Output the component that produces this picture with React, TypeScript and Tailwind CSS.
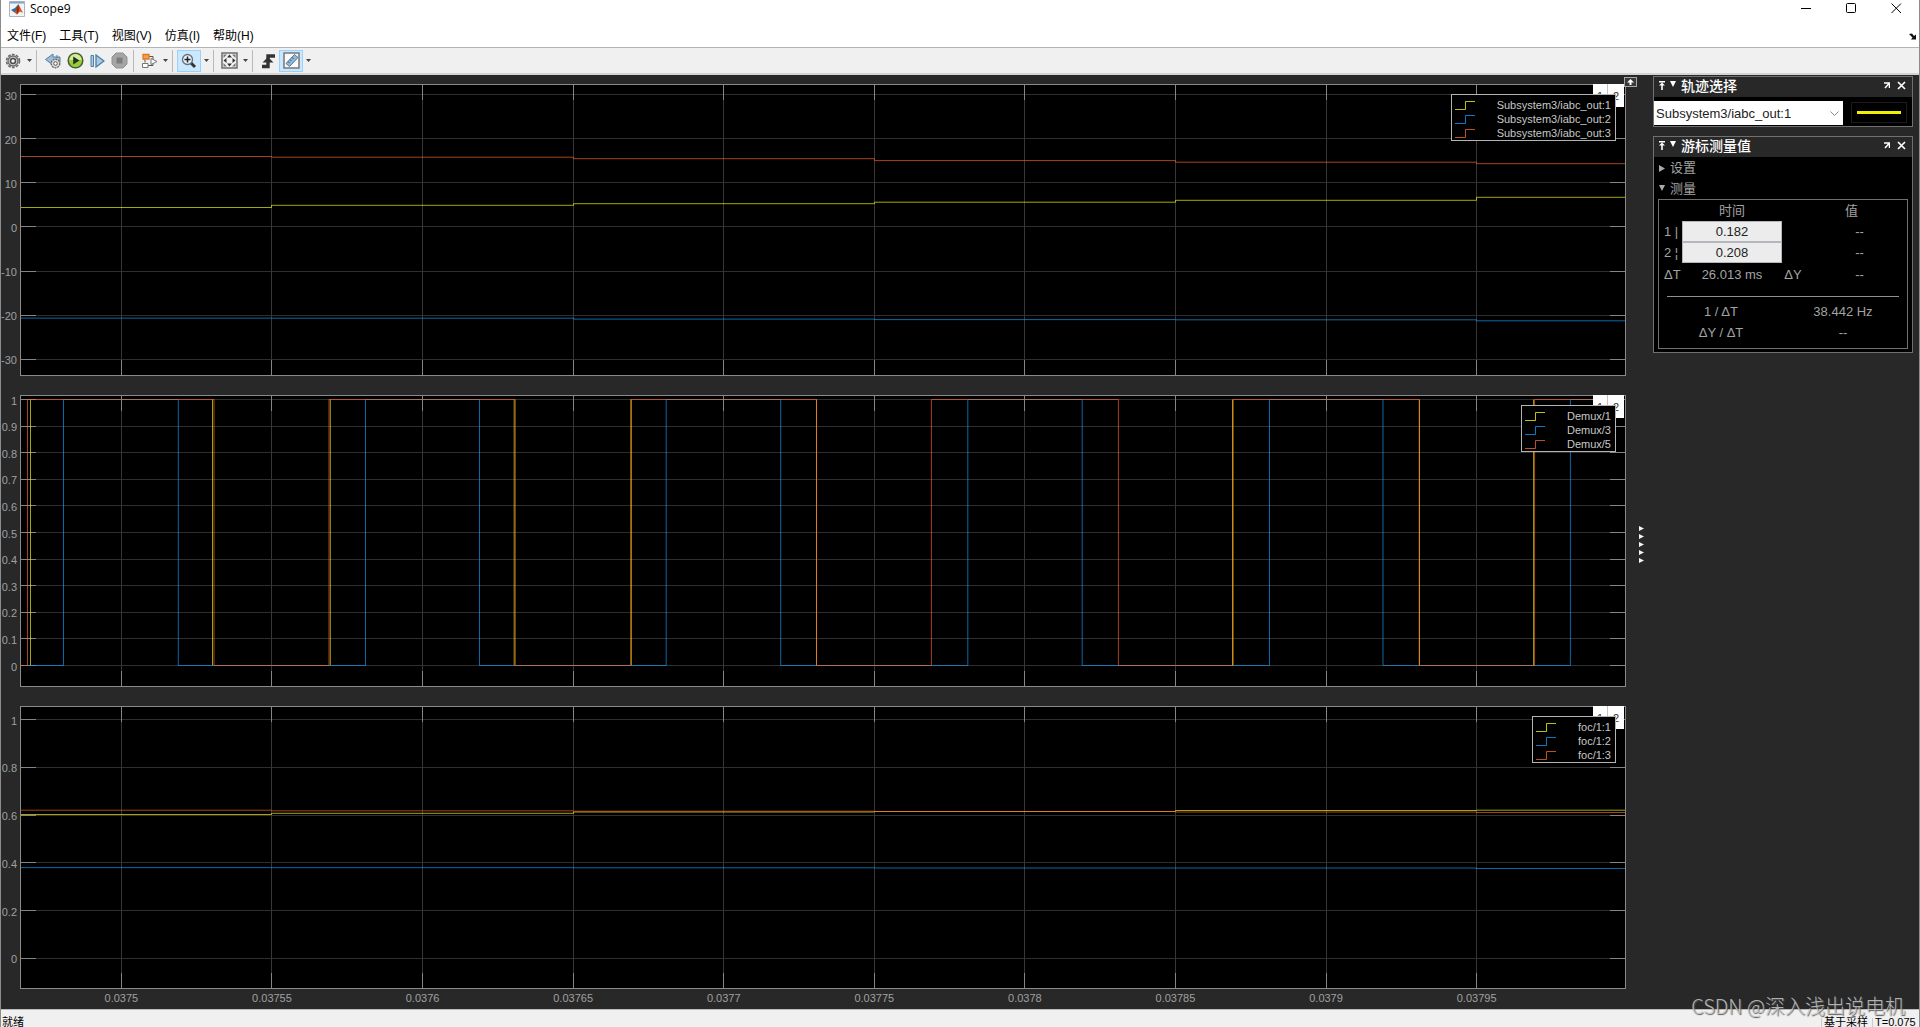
import { useState } from "react";
import type { ReactNode } from "react";

type Trace = { color: string; d: string };

type PlotProps = {
  name: string;
  height: number;
  yTicks: { label: string; y: number }[];
  traces: Trace[];
  legend: string[];
  showTime?: boolean;
  className: string;
};

const YELLOW = "#ffff11";
const BLUE = "#139fff";
const RED = "#ff6929";
const COLORS = [YELLOW, BLUE, RED];

// all plots share one time axis, WIDTH drawing units wide
const WIDTH = 1606;
const timeTicks = [
  "0.0375",
  "0.03755",
  "0.0376",
  "0.03765",
  "0.0377",
  "0.03775",
  "0.0378",
  "0.03785",
  "0.0379",
  "0.03795",
].map((label, i) => ({ label, x: 101.4 + i * 150.58 }));

const sampleTimes = [0, 251.5, 553.5, 854.5, 1155.5, 1456.5];

// held signal, one level for each sample
function steps(levels: number[]) {
  return (
    levels
      .map((y, i) => (i === 0 ? `M0 ${y}` : `H${sampleTimes[i]} V${y}`))
      .join(" ") + ` H${WIDTH}`
  );
}

const HIGH = 4.5;
const LOW = 270.5;

// on/off signal that toggles at each edge
function pulses(edges: number[]) {
  let on = false;
  let d = `M0 ${LOW}`;
  edges.forEach((x) => {
    on = !on;
    d += ` H${x} V${on ? HIGH : LOW}`;
  });
  return d + ` H${WIDTH}`;
}

// only the edges, for a signal whose levels run under another one
function edgeLines(edges: number[]) {
  return edges.map((x) => `M${x} ${HIGH}V${LOW}`).join(" ");
}

function ticks(labels: string[], first: number, step: number) {
  return labels.map((label, i) => ({ label, y: first + i * step }));
}

const currentTraces: Trace[] = [
  { color: YELLOW, d: steps([123.5, 121.3, 119.7, 118.2, 116.3, 113.3]) },
  { color: BLUE, d: steps([234.1, 234.2, 235.1, 235.6, 235.8, 236.8]) },
  { color: RED, d: steps([72.5, 73.2, 74.7, 76.6, 78.2, 79.7]) },
];

const pwmTraces: Trace[] = [
  {
    color: YELLOW,
    d: edgeLines([10.5, 192.5, 310.3, 494.2, 611.3, 796.5, 1212.5, 1399.5, 1513.6]),
  },
  {
    color: BLUE,
    d: pulses([43.5, 158.3, 345.5, 459.5, 646.2, 760.7, 947.8, 1062.2, 1249.5, 1363, 1550.4]),
  },
  {
    color: RED,
    d: pulses([7.5, 194, 309, 495.3, 610.6, 796.5, 911.4, 1098.4, 1213.3, 1399.2, 1514.6]),
  },
];

const dutyTraces: Trace[] = [
  { color: YELLOW, d: steps([108.5, 107.3, 106, 105.5, 104.5, 104.2]) },
  { color: BLUE, d: steps([161.6, 161.7, 161.8, 162, 162, 162.5]) },
  { color: RED, d: steps([104.2, 104.8, 105.2, 105.5, 106, 106.5]) },
];

function Plot({ name, height, yTicks, traces, legend, showTime, className }: PlotProps) {
  const px = (x: number) => `${(x / WIDTH) * 100}%`;
  const py = (y: number) => `${(y / height) * 100}%`;

  return (
    <section aria-label={name} className={`relative min-h-0 basis-0 ${className}`}>
      <svg className="block h-full w-full overflow-visible bg-black">
        <g stroke="#2f2f2f" shapeRendering="crispEdges">
          {yTicks.map((t) => (
            <line key={t.label} x1="0" x2="100%" y1={py(t.y)} y2={py(t.y)} />
          ))}
          {timeTicks.map((t) => (
            <line key={t.label} x1={px(t.x)} x2={px(t.x)} y1="0" y2="100%" stroke="#373737" />
          ))}
        </g>
        <g stroke="#858585" shapeRendering="crispEdges">
          {yTicks.map((t) => (
            <g key={t.label}>
              <line x1="0" x2="16" y1={py(t.y)} y2={py(t.y)} />
              <svg x="100%" overflow="visible">
                <line x1="-16" x2="0" y1={py(t.y)} y2={py(t.y)} />
              </svg>
            </g>
          ))}
          {timeTicks.map((t) => (
            <g key={t.label}>
              <line x1={px(t.x)} x2={px(t.x)} y1="0" y2="16" />
              <svg y="100%" overflow="visible">
                <line x1={px(t.x)} x2={px(t.x)} y1="-16" y2="0" />
              </svg>
            </g>
          ))}
        </g>
        <svg viewBox={`0 0 ${WIDTH} ${height}`} preserveAspectRatio="none" width="100%" height="100%">
          {traces.map((t) => (
            <path
              key={t.color}
              d={t.d}
              fill="none"
              stroke={t.color}
              strokeOpacity="0.65"
              vectorEffect="non-scaling-stroke"
            />
          ))}
        </svg>
        <g className="fill-[#a0a0a0] font-['Liberation_Sans',sans-serif] text-[11px]">
          {yTicks.map((t) => (
            <text key={t.label} x="-3" y={py(t.y)} dy="5" textAnchor="end">
              {t.label}
            </text>
          ))}
          {showTime &&
            timeTicks.map((t) => (
              <text key={t.label} x={px(t.x)} y="100%" dy="13" textAnchor="middle">
                {t.label}
              </text>
            ))}
        </g>
      </svg>
      <div className="pointer-events-none absolute inset-0 border border-[#8a8a8a]" />
      <div className="absolute top-0 right-[2px] flex h-[23px] divide-x divide-[#c4c4c4] bg-white text-[11px] leading-[25px] text-[#333]">
        <span className="w-[15px] text-center">1</span>
        <span className="w-4 text-center">2</span>
      </div>
      <ul className="absolute top-[10px] right-[10px] border border-[#b4b4b4] bg-black pt-[3px] pr-1 pl-[3px] text-[11px] leading-[14px] text-[#c8c8c8]">
        {legend.map((label, i) => (
          <li key={label} className="flex items-center justify-between gap-[22px]">
            <svg width="20" height="11" fill="none" stroke={COLORS[i]} strokeOpacity="0.75">
              <path d="M0 9.5H10.5V1.5H20" />
            </svg>
            {label}
          </li>
        ))}
      </ul>
    </section>
  );
}

function Caret() {
  return (
    <svg width="5" height="3" className="mr-1 ml-[3px]">
      <path d="M0 0H5L2.5 3Z" fill="#444" />
    </svg>
  );
}

function Separator() {
  return <div className="h-[22px] w-px bg-[#b9b9b9]" />;
}

function ToolButton({
  label,
  active,
  children,
}: {
  label: string;
  active?: boolean;
  children: ReactNode;
}) {
  return (
    <button
      type="button"
      aria-label={label}
      className={
        active
          ? "flex h-[22px] w-6 items-center justify-center border border-[#99d1ff] bg-[#cce8ff]"
          : "flex h-[22px] w-[22px] items-center justify-center"
      }
    >
      {children}
    </button>
  );
}

function Toolbar() {
  return (
    <div className="flex h-7 items-center border-t border-b-2 border-t-[#b4b4b4] border-b-[#d2d5d2] bg-[#f0f0f0] pl-px">
      <ToolButton label="配置属性">
        <svg width="16" height="16" viewBox="0 0 16 16" fill="none">
          <circle cx="8" cy="8" r="6.5" stroke="#6a6a6a" strokeWidth="1.6" strokeDasharray="2.8 1.3" />
          <circle cx="8" cy="8" r="5" fill="#d0d0d0" stroke="#6a6a6a" strokeWidth="1.3" />
          <circle cx="8" cy="8" r="2.5" fill="#f4f4f4" stroke="#4c4c4c" strokeWidth="1.5" />
        </svg>
      </ToolButton>
      <Caret />
      <Separator />
      <div className="flex pr-[3px] pl-[5px]">
        <ToolButton label="步退">
          <svg width="16" height="16" viewBox="0 0 16 16">
            <path d="M8 1V4H15V9H8V12L0.5 6.5Z" fill="#9dbdd6" stroke="#557f9f" />
            <path d="M12 2V5" stroke="#557f9f" />
            <circle cx="10.5" cy="10.5" r="4.3" fill="#ddd" stroke="#666" strokeDasharray="2 0.8" strokeWidth="1.3" />
            <circle cx="10.5" cy="10.5" r="1.8" fill="#fff" stroke="#555" />
          </svg>
        </ToolButton>
        <ToolButton label="运行">
          <svg width="17" height="17" viewBox="0 0 17 17">
            <circle cx="8.5" cy="8.5" r="7.3" fill="#9ccb3b" stroke="#44613a" strokeWidth="1.5" />
            <path d="M2.5 8A6 6 0 0 1 14.5 8Z" fill="#d6ec9d" />
            <path d="M6.2 4.5V12.5L12.5 8.5Z" fill="#26331c" />
          </svg>
        </ToolButton>
        <ToolButton label="步进">
          <svg width="15" height="14" viewBox="0 0 15 14" fill="#a9cbe4" stroke="#4c7fa8">
            <path d="M1 1.5H3.5V12.5H1Z" />
            <path d="M6 1V13L14 7Z" strokeWidth="1.3" />
          </svg>
        </ToolButton>
        <ToolButton label="停止">
          <svg width="17" height="17" viewBox="0 0 17 17">
            <path d="M5 1H12L16 5V12L12 16H5L1 12V5Z" fill="#a5a5a5" stroke="#929292" />
            <path d="M5.5 5.5H11.5V11.5H5.5Z" fill="#7c7c7c" />
          </svg>
        </ToolButton>
      </div>
      <Separator />
      <div className="flex items-center pl-1">
        <ToolButton label="突出显示模块">
          <svg width="17" height="16" viewBox="0 0 17 16" fill="#fff">
            <path d="M8 3.5H12V7M4 9.5V6.5M7 12.5H12V9" fill="none" stroke="#555" />
            <path d="M2 1.5H8V6H2Z" fill="#f5a050" stroke="#dc7a22" strokeWidth="1.3" />
            <path d="M10 5.5L16 8.5L10 11.5Z" stroke="#777" />
            <path d="M1.5 10.5H7V14.5H1.5Z" stroke="#777" />
          </svg>
        </ToolButton>
        <Caret />
      </div>
      <Separator />
      <div className="flex items-center pl-1">
        <ToolButton label="放大" active>
          <svg width="16" height="16" viewBox="0 0 16 16" fill="none">
            <path d="M10 10L14 14" stroke="#333" strokeWidth="3" />
            <circle cx="6.5" cy="6.5" r="5" fill="#e9f3fb" stroke="#607080" strokeWidth="1.3" />
            <path d="M3.5 6.5H9.5M6.5 3.5V9.5" stroke="#222" strokeWidth="1.5" />
          </svg>
        </ToolButton>
        <Caret />
      </div>
      <Separator />
      <div className="flex items-center pl-1">
        <ToolButton label="缩放坐标区">
          <svg width="17" height="17" viewBox="0 0 17 17" fill="#333">
            <path d="M1 1H16V16H1Z" fill="#f3f3f3" stroke="#6d6d6d" strokeWidth="1.5" />
            <path d="M8.5 2.5L11 5.5H6ZM8.5 14.5L11 11.5H6ZM2.5 8.5L5.5 6V11ZM14.5 8.5L11.5 6V11Z" />
            <path d="M2.5 2.5H6L2.5 6ZM14.5 2.5V6L11 2.5ZM2.5 14.5V11L6 14.5ZM14.5 14.5H11L14.5 11Z" fill="#777" />
          </svg>
        </ToolButton>
        <Caret />
      </div>
      <Separator />
      <div className="flex items-center pl-1">
        <ToolButton label="触发器">
          <svg width="15" height="16" viewBox="0 0 15 16" fill="none">
            <path d="M1 13.5H7V3H14" stroke="#333" strokeWidth="3.4" />
            <path d="M7 4L12.5 9.5H1.5Z" fill="#333" />
          </svg>
        </ToolButton>
        <ToolButton label="游标测量值" active>
          <svg width="17" height="17" viewBox="0 0 17 17">
            <path d="M1 1H16V16H1Z" fill="#fafafa" stroke="#777" strokeWidth="1.5" />
            <path d="M3 11.5L11.5 2.5L15 5.5L6.5 14.5Z" fill="#8cb9dc" stroke="#557b9c" />
            <path d="M5 9.5L6.5 11M7 7.5L8.5 9M9 5.3L10.5 7" stroke="#39566f" />
          </svg>
        </ToolButton>
        <Caret />
      </div>
    </div>
  );
}

function TitleBar() {
  return (
    <header className="bg-white text-xs text-black">
      <div className="flex h-[17px] items-center pr-[17px] pl-2">
        <svg width="16" height="16" viewBox="0 0 16 16" className="mr-[5px]">
          <path d="M0.5 0.5H15.5V15.5H0.5Z" fill="#f2f4f6" stroke="#a9b4bd" />
          <path d="M1 1H15V2.5H1Z" fill="#7ca7c7" />
          <path d="M2 9L6 7L9 3.5L8 10L5.5 11.5Z" fill="#2d6da3" />
          <path d="M5.5 11.5L7.5 8L9.5 3L14 12L11 10.5L8 13.5Z" fill="#d9541e" />
          <path d="M9.5 3L10 9L8 13.5L7.5 8Z" fill="#8c2b12" />
        </svg>
        <h1 className="font-['Open_Sans','Noto_Sans',sans-serif]">Scope9</h1>
        <div className="ml-auto flex gap-[34px]">
          <button type="button" aria-label="最小化">
            <svg width="11" height="11">
              <path d="M0 5.5H10" stroke="#000" />
            </svg>
          </button>
          <button type="button" aria-label="最大化">
            <svg width="11" height="11">
              <rect x="0.5" y="0.5" width="9" height="9" rx="1" fill="none" stroke="#000" />
            </svg>
          </button>
          <button type="button" aria-label="关闭">
            <svg width="11" height="11">
              <path d="M0.5 0.5L10 10M10 0.5L0.5 10" stroke="#000" />
            </svg>
          </button>
        </div>
      </div>
      <nav className="flex h-[30px] items-center gap-[13px] pt-2 pr-[3px] pl-[6px]">
        {["文件(F)", "工具(T)", "视图(V)", "仿真(I)", "帮助(H)"].map((item) => (
          <button key={item} type="button">
            {item}
          </button>
        ))}
        <svg width="7" height="7" className="ml-auto">
          <path d="M0 1L3 0.5L5 3L7 1.5V6.5H2L3.5 4.5Z" fill="#111" />
        </svg>
      </nav>
    </header>
  );
}

function PanelHeader({ title }: { title: string }) {
  return (
    <div className="flex h-5 items-center bg-[#282828] pr-[6px] pb-[3px] pl-[5px] text-white">
      <svg width="19" height="9" fill="#fff" className="mr-[3px]">
        <path d="M0 0H6V1.500H0ZM3 1.500L6 4.500H0ZM2.200 4H3.800V9H2.200Z" />
        <path d="M11 0H17L14 6Z" />
      </svg>
      <h2 className="text-sm leading-4 font-medium">{title}</h2>
      <button type="button" aria-label={`取消停靠${title}`} className="mr-[7px] ml-auto">
        <svg width="6" height="7" fill="none" stroke="#fff">
          <path d="M0 1H5.5V6M5 1.5L1 6" strokeWidth="1.5" />
        </svg>
      </button>
      <button type="button" aria-label={`关闭${title}`}>
        <svg width="9" height="9" stroke="#fff" strokeWidth="1.6">
          <path d="M1 1L8 8M8 1L1 8" />
        </svg>
      </button>
    </div>
  );
}

function CursorRow({ id, mark, initial }: { id: string; mark: string; initial: string }) {
  const [time, setTime] = useState(initial);

  return (
    <tr className="h-[21px]">
      <th className="pl-[5px] text-left font-normal whitespace-nowrap">
        <label htmlFor={id}>{mark}</label>
      </th>
      <td>
        <input
          id={id}
          value={time}
          onChange={(e) => setTime(e.target.value)}
          className="block h-[21px] w-full border border-[#b5b5bd] bg-[#ececec] pb-px text-center text-[13px] text-[#222] outline-none"
        />
      </td>
      <td />
      <td className="pl-2">--</td>
    </tr>
  );
}

function Sidebar() {
  return (
    <aside className="mr-[6px] flex w-[260px] shrink-0 flex-col gap-[9px] text-[13px]">
      <section className="border border-[#707070] bg-black">
        <PanelHeader title="轨迹选择" />
        <div className="flex h-[29px] items-center gap-2 pt-[3px]">
          <div className="relative h-6 w-[189px]">
            <select
              aria-label="轨迹"
              className="h-full w-full appearance-none bg-white pt-px pl-[2px] text-[13px] text-[#222] outline-none"
            >
              <option>Subsystem3/iabc_out:1</option>
              <option>Subsystem3/iabc_out:2</option>
              <option>Subsystem3/iabc_out:3</option>
            </select>
            <svg
              width="9"
              height="6"
              fill="none"
              stroke="#888"
              className="pointer-events-none absolute top-[10px] right-1"
            >
              <path d="M0.5 0.5L4.5 4.5L8.5 0.5" />
            </svg>
          </div>
          <div className="mb-[2px] flex h-[21px] w-14 items-center justify-center border border-[#1c1c1c]">
            <div className="h-[3px] w-11 bg-[#f0f000]" />
          </div>
        </div>
      </section>

      <section className="border border-[#707070] bg-black pb-[3px] text-[#a3a3a3]">
        <PanelHeader title="游标测量值" />
        <button type="button" className="mt-px flex h-5 w-full items-center gap-1 pl-[5px]">
          <svg width="7" height="7" fill="#aaa">
            <path d="M0 0L6 3.5L0 7Z" />
          </svg>
          设置
        </button>
        <button type="button" className="flex h-[21px] w-full items-center gap-1 pl-[5px]">
          <svg width="7" height="7" fill="#aaa">
            <path d="M0 0H6L3 6Z" />
          </svg>
          测量
        </button>
        <div className="mx-1 border border-[#707070] pb-[5px]">
          <table className="w-full table-fixed border-collapse text-center leading-5">
            <colgroup>
              <col className="w-[23px]" />
              <col className="w-[100px]" />
              <col className="w-[22px]" />
              <col />
            </colgroup>
            <thead>
              <tr className="h-[21px]">
                <td />
                <th className="font-normal">时间</th>
                <td />
                <th className="pr-2 font-normal">值</th>
              </tr>
            </thead>
            <tbody>
              <CursorRow id="cursor-1" mark="1 |" initial="0.182" />
              <CursorRow id="cursor-2" mark="2 ¦" initial="0.208" />
              <tr className="h-6">
                <th className="pl-[5px] text-left font-normal">ΔT</th>
                <td>26.013 ms</td>
                <th className="font-normal">ΔY</th>
                <td className="pl-2">--</td>
              </tr>
            </tbody>
          </table>
          <hr className="mx-2 mt-[9px] mb-1 border-[#909090]" />
          <table className="mx-2 w-[232px] table-fixed border-collapse text-center leading-[21px]">
            <tbody>
              <tr>
                <th className="pr-2 font-normal">1 / ΔT</th>
                <td className="pl-1">38.442 Hz</td>
              </tr>
              <tr>
                <th className="pr-2 font-normal">ΔY / ΔT</th>
                <td className="pl-1">--</td>
              </tr>
            </tbody>
          </table>
        </div>
      </section>
    </aside>
  );
}

export default function App() {
  return (
    <div className="relative flex h-screen flex-col overflow-hidden border-x border-[#8c8c8c] bg-[#282828] font-['Liberation_Sans','Noto_Sans_CJK_SC',sans-serif]">
      <TitleBar />
      <Toolbar />

      <main className="flex min-h-0 flex-1 pt-px">
        <div className="flex min-w-0 flex-1 flex-col gap-[19px] pt-2 pb-5 pl-[19px]">
          <Plot
            name="电流"
            height={292}
            className="grow-[292]"
            yTicks={ticks(["30", "20", "10", "0", "-10", "-20", "-30"], 10.5, 44.15)}
            traces={currentTraces}
            legend={["Subsystem3/iabc_out:1", "Subsystem3/iabc_out:2", "Subsystem3/iabc_out:3"]}
          />
          <Plot
            name="PWM"
            height={292}
            className="grow-[292]"
            yTicks={ticks(
              ["1", "0.9", "0.8", "0.7", "0.6", "0.5", "0.4", "0.3", "0.2", "0.1", "0"],
              4.5,
              26.6
            )}
            traces={pwmTraces}
            legend={["Demux/1", "Demux/3", "Demux/5"]}
          />
          <Plot
            name="占空比"
            height={283}
            className="grow-[283]"
            yTicks={ticks(["1", "0.8", "0.6", "0.4", "0.2", "0"], 13.6, 47.75)}
            traces={dutyTraces}
            legend={["foc/1:1", "foc/1:2", "foc/1:3"]}
            showTime
          />
        </div>

        <div className="relative flex w-[27px] shrink-0 items-center justify-center">
          <button
            type="button"
            aria-label="最大化坐标区"
            className="absolute top-px left-[-2px] flex h-[10px] w-[13px] items-center justify-center border border-[#a8a8a8] bg-[#3a3a3a]"
          >
            <svg width="9" height="8" fill="#fff">
              <path d="M4.5 1L8 4.5H5.5V7H3.5V4.5H1Z" />
            </svg>
          </button>
          <svg width="5" height="37" fill="#f4f4f4" className="mt-[3px] ml-[3px]">
            {[0, 8, 16, 24, 32].map((y) => (
              <path key={y} d={`M0 ${y}L5 ${y + 2.5}L0 ${y + 5}Z`} />
            ))}
          </svg>
        </div>

        <Sidebar />
      </main>

      <footer className="flex h-[18px] items-end overflow-hidden border-t border-[#bbb] bg-[#f0f0f0] text-[11px] leading-[9px] text-black">
        <span className="pl-px">就绪</span>
        <span className="mr-1 ml-auto border-l border-[#ccc] pl-[2px]">基于采样</span>
        <span className="w-[47px] border-l border-[#ccc] pl-[2px]">T=0.075</span>
      </footer>

      <div className="pointer-events-none absolute right-[14px] bottom-[6px] font-['Noto_Sans_CJK_SC',sans-serif] text-xl leading-[30px] font-light text-[#c4c4c4]/90 [text-shadow:1px_1px_1px_#555]">
        CSDN @深入浅出说电机
      </div>
    </div>
  );
}
